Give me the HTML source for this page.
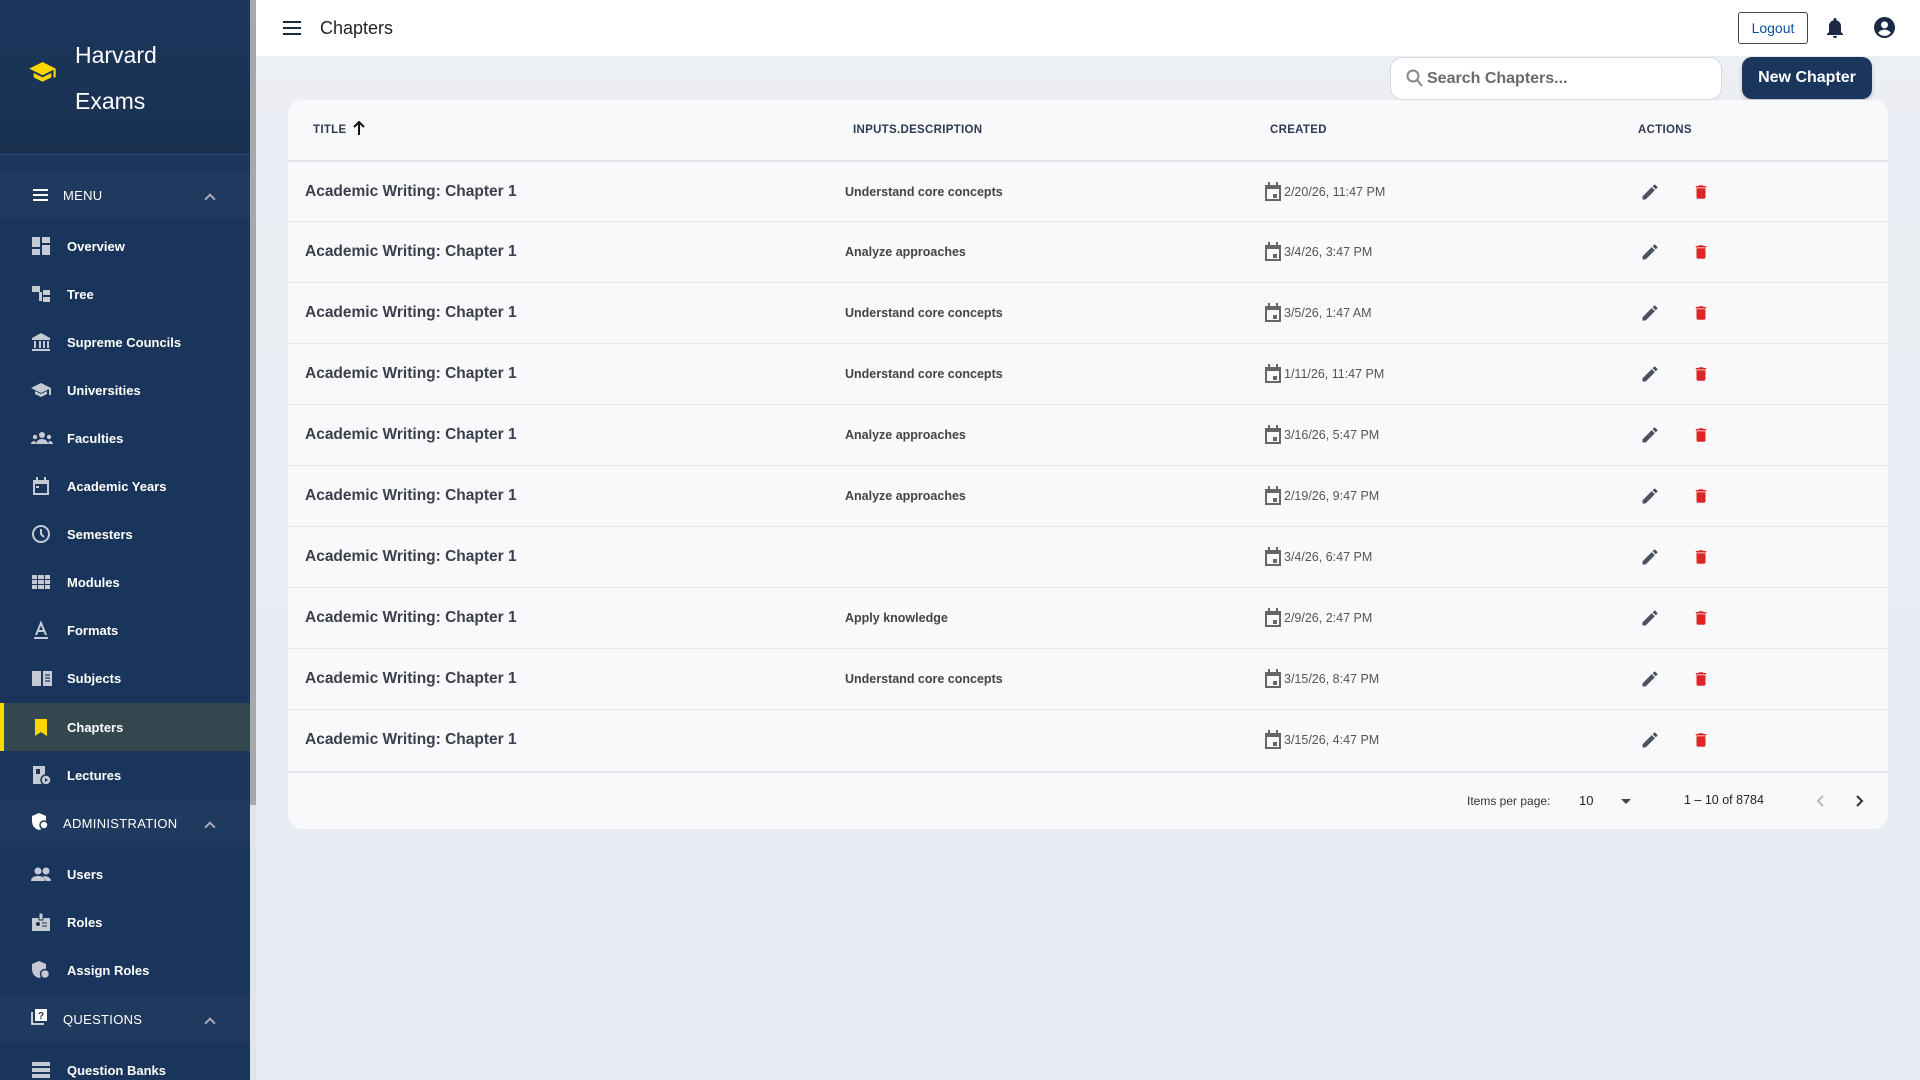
<!DOCTYPE html>
<html><head><meta charset="utf-8"><style>
*{box-sizing:border-box;margin:0;padding:0}
html{overflow:hidden}
body{width:1920px;height:1080px;overflow:hidden;font-family:"Liberation Sans",sans-serif;background:linear-gradient(180deg,#eceff4,#e6eaf1);position:relative}
.sb{position:absolute;left:0;top:0;width:250px;height:1080px;background:#1a355b;color:#fff;overflow:hidden}
.sbar{position:absolute;left:250px;top:0;width:6px;height:1080px;background:#e2e4e8}
.sbar i{position:absolute;left:0;top:0;width:6px;height:805px;background:#a8a8a8}
.brand{height:155px;background:linear-gradient(180deg,#1b365d,#1a3150);border-bottom:1px solid #2d4a70;position:relative}
.brand .t{position:absolute;left:75px;top:32px;font-size:23px;line-height:46px}
.sec{position:absolute;left:0;width:250px;height:48px;background:#20395e;font-size:13px;display:flex;align-items:center}
.sec span{position:absolute;left:63px;letter-spacing:.3px}
.sec .chev{position:absolute;left:206px;top:24px;width:8px;height:8px;border-left:2px solid #aab;border-top:2px solid #aab;transform:rotate(45deg)}
.it{position:absolute;left:0;width:250px;height:48px;font-size:13px;font-weight:bold;display:flex;align-items:center}
.it span{position:absolute;left:67px}
.it svg{position:absolute;left:31px;top:14px}
.act{background:#34474f;border-left:4px solid #ffd600}
.hdr{position:absolute;left:256px;top:0;right:0;height:56px;background:#fff}
.card{position:absolute;left:288px;top:100px;width:1600px;height:729px;background:#f9f9fc;border-radius:14px;overflow:hidden}
.th{position:absolute;top:0;height:60px;font-size:11.5px;font-weight:bold;color:#2e3a55;line-height:60px;letter-spacing:.3px}
.row{position:absolute;left:0;width:1600px;height:61px;border-top:1px solid #e6e7ee}
.row .a{position:absolute;left:17px;top:21px;font-size:15.5px;font-weight:bold;color:#3a3f4b}
.row .d{position:absolute;left:557px;top:23px;font-size:12.5px;font-weight:bold;color:#444}
.row .c{position:absolute;left:976px;top:20px;font-size:12.5px;color:#555;display:flex;align-items:center;gap:2px}
.row .e{position:absolute;left:1352px;top:20px}
.row .x{position:absolute;left:1404px;top:20px}
</style></head><body>
<div class="sb">
 <div class="brand">
  <svg style="position:absolute;left:29px;top:62px" width="27" height="22" viewBox="0 0 24 20"><path fill="#ffd600" d="M12 0L0 6l12 6 10-5v7h2V6z M4 10v4l8 4 8-4v-4l-8 4z"/></svg>
  <div class="t">Harvard<br>Exams</div>
 </div>
 <div class="sec" style="top:171px"><svg style="position:absolute;left:33px;top:18px" width="15" height="12"><rect y="0" width="15" height="2" fill="#fff"/><rect y="5" width="15" height="2" fill="#fff"/><rect y="10" width="15" height="2" fill="#fff"/></svg><span>MENU</span><i class="chev"></i></div>
 <div class="it" style="top:222px"><svg width="20" height="20"><rect x="1" y="1" width="8" height="10" fill="#c5cad3"/><rect x="11" y="1" width="8" height="6" fill="#c5cad3"/><rect x="1" y="13" width="8" height="6" fill="#c5cad3"/><rect x="11" y="9" width="8" height="10" fill="#c5cad3"/></svg><span>Overview</span></div>
 <div class="it" style="top:270px"><svg width="20" height="20"><rect x="1" y="2" width="8" height="6" fill="#c5cad3"/><rect x="12" y="6" width="7" height="5" fill="#c5cad3"/><rect x="12" y="13" width="7" height="5" fill="#c5cad3"/><rect x="8" y="8" width="3" height="9" fill="#c5cad3"/></svg><span>Tree</span></div>
 <div class="it" style="top:318px"><svg width="20" height="20"><path fill="#c5cad3" d="M10 1L1 6v2h18V6zM3 9h2v7H3zM8 9h2v7H8zM12 9h2v7h-2zM16 9h2v7h-2zM1 17h18v2H1z"/></svg><span>Supreme Councils</span></div>
 <div class="it" style="top:366px"><svg width="20" height="20"><path fill="#c5cad3" d="M10 3L0 8l10 5 8-4v6h2V8zM4 11v3l6 3 6-3v-3l-6 3z"/></svg><span>Universities</span></div>
 <div class="it" style="top:414px"><svg width="22" height="20"><circle cx="11" cy="7" r="3" fill="#c5cad3"/><circle cx="4" cy="9" r="2.2" fill="#c5cad3"/><circle cx="18" cy="9" r="2.2" fill="#c5cad3"/><path fill="#c5cad3" d="M5 16c0-3 3-5 6-5s6 2 6 5zM0 16c0-2 2-3 4-3l1 3zM22 16c0-2-2-3-4-3l-1 3z"/></svg><span>Faculties</span></div>
 <div class="it" style="top:462px"><svg width="20" height="20"><path fill="#c5cad3" d="M2 4h16v15H2zM5 1h2v4H5zM13 1h2v4h-2z"/><rect x="4" y="8" width="12" height="9" fill="#1a355b"/><rect x="5" y="10" width="3" height="2" fill="#c5cad3"/></svg><span>Academic Years</span></div>
 <div class="it" style="top:510px"><svg width="20" height="20"><circle cx="10" cy="10" r="8" fill="none" stroke="#c5cad3" stroke-width="2"/><path d="M10 5v5l3 3" stroke="#c5cad3" stroke-width="2" fill="none"/></svg><span>Semesters</span></div>
 <div class="it" style="top:558px"><svg width="20" height="20"><path fill="#c5cad3" d="M1 3h5v4H1zM7 3h6v4H7zM14 3h5v4h-5zM1 8h5v4H1zM7 8h6v4H7zM14 8h5v4h-5zM1 13h5v4H1zM7 13h6v4H7zM14 13h5v4h-5z"/></svg><span>Modules</span></div>
 <div class="it" style="top:606px"><svg width="20" height="20"><path fill="none" stroke="#c5cad3" stroke-width="2" d="M5 15L10 3l5 12M7 11h6M3 18h14"/></svg><span>Formats</span></div>
 <div class="it" style="top:654px"><svg width="22" height="20"><path fill="#c5cad3" d="M1 3h9v15H1zM12 3h9v15h-9z"/><path stroke="#1a355b" stroke-width="1.2" d="M14 7h5M14 10h5M14 13h5"/></svg><span>Subjects</span></div>
 <div class="it act" style="top:703px"><svg style="left:27px" width="20" height="20"><path fill="#ffd600" d="M4 2h12v17l-6-4-6 4z"/></svg><span style="left:63px">Chapters</span></div>
 <div class="it" style="top:751px"><svg width="20" height="20"><path fill="#c5cad3" d="M2 1h12v18H2z"/><rect x="5" y="4" width="4" height="5" fill="#1a355b"/><circle cx="15" cy="15" r="5" fill="#c5cad3" stroke="#1a355b" stroke-width="1.5"/><path d="M14 13l3 2-3 2z" fill="#1a355b"/></svg><span>Lectures</span></div>
 <div class="sec" style="top:799px"><svg style="position:absolute;left:32px;top:14px" width="16" height="18"><path fill="#fff" d="M7 0l7 3v5c0 5-3 8-7 9-4-1-7-4-7-9V3z"/><circle cx="12" cy="12" r="4" fill="#fff" stroke="#20395e" stroke-width="1.5"/></svg><span>ADMINISTRATION</span><i class="chev"></i></div>
 <div class="it" style="top:850px"><svg width="22" height="20"><circle cx="7" cy="7" r="3.5" fill="#c5cad3"/><circle cx="15" cy="7" r="3.5" fill="#c5cad3"/><path fill="#c5cad3" d="M0 17c0-4 4-5 7-5s7 1 7 5zM12 12c3 0 8 1 8 5h-5z"/></svg><span>Users</span></div>
 <div class="it" style="top:898px"><svg width="20" height="20"><path fill="#c5cad3" d="M1 6h18v13H1z"/><rect x="8" y="1" width="4" height="7" fill="#c5cad3" stroke="#1a355b"/><circle cx="7" cy="12" r="2" fill="#1a355b"/><path stroke="#1a355b" d="M11 11h5M11 14h5"/></svg><span>Roles</span></div>
 <div class="it" style="top:946px"><svg width="20" height="20"><path fill="#c5cad3" d="M8 1l7 3v5c0 5-3 8-7 9-4-1-7-4-7-9V4z"/><circle cx="14" cy="14" r="4.5" fill="#c5cad3" stroke="#1a355b" stroke-width="1.5"/></svg><span>Assign Roles</span></div>
 <div class="sec" style="top:995px"><svg style="position:absolute;left:31px;top:13px" width="17" height="17"><path fill="none" stroke="#fff" stroke-width="1.5" d="M1 4v12h12"/><rect x="4" y="1" width="12" height="12" fill="#fff"/><text x="7" y="11" font-size="10" font-weight="bold" fill="#20395e" font-family="Liberation Sans">?</text></svg><span>QUESTIONS</span><i class="chev"></i></div>
 <div class="it" style="top:1046px"><svg width="20" height="20"><path fill="#c5cad3" d="M1 2h18v4H1zM1 8h18v4H1zM1 14h18v4H1z"/></svg><span>Question Banks</span></div>
</div>
<div class="sbar"><i></i></div>
<div class="hdr">
 <svg style="position:absolute;left:27px;top:21px" width="18" height="14"><rect width="18" height="2" fill="#1d2b44"/><rect y="6" width="18" height="2" fill="#1d2b44"/><rect y="12" width="18" height="2" fill="#1d2b44"/></svg>
 <div style="position:absolute;left:64px;top:18px;font-size:18px;color:#222">Chapters</div>
 <div style="position:absolute;left:1482px;top:12px;width:70px;height:32px;border:1px solid #444;border-radius:3px;color:#0f4fa8;font-size:14px;text-align:center;line-height:30px">Logout</div>
 <svg style="position:absolute;left:1570px;top:18px" width="18" height="21" viewBox="0 0 18 21"><path fill="#1a2a44" d="M9 0a1.5 1.5 0 0 1 1.5 1.5v.8C13 3 15 5.3 15 8v6l2 2v1H1v-1l2-2V8c0-2.7 2-5 4.5-5.7v-.8A1.5 1.5 0 0 1 9 0zM7 18h4a2 2 0 0 1-4 0z"/></svg>
 <svg style="position:absolute;left:1618px;top:17px" width="21" height="21" viewBox="0 0 20 20"><circle cx="10" cy="10" r="10" fill="#1a2a44"/><circle cx="10" cy="7.5" r="3.3" fill="#fff"/><path fill="#fff" d="M4 15c1.5-2 3.5-3 6-3s4.5 1 6 3c-1.5 2-3.5 3-6 3s-4.5-1-6-3z"/></svg>
</div>
<div style="position:absolute;left:1390px;top:57px;width:332px;height:43px;background:#fff;border:1px solid #d5d8de;border-radius:12px">
 <svg style="position:absolute;left:15px;top:11px" width="18" height="19"><circle cx="7" cy="7" r="5.5" fill="none" stroke="#888" stroke-width="2"/><path d="M11 11l5 6" stroke="#888" stroke-width="2"/></svg>
 <div style="position:absolute;left:36px;top:12px;font-size:16px;font-weight:bold;color:#6a6a6a">Search Chapters...</div>
</div>
<div style="position:absolute;left:1742px;top:57px;width:130px;height:42px;background:#1b365d;border-radius:10px;color:#fff;font-size:16px;font-weight:bold;text-align:center;line-height:42px;box-shadow:0 2px 4px rgba(0,0,0,.2)">New Chapter</div>
<div class="card">
 <div class="th" style="left:25px">TITLE <svg width="12" height="14" style="vertical-align:-2px;margin-left:3px"><path d="M6 1v13M1 6l5-5 5 5" stroke="#111" stroke-width="2" fill="none"/></svg></div>
 <div class="th" style="left:565px">INPUTS.DESCRIPTION</div>
 <div class="th" style="left:982px">CREATED</div>
 <div class="th" style="left:1350px">ACTIONS</div>
 <div id="rows"></div>
 <div style="position:absolute;left:0;top:671px;width:1600px;border-top:2px solid #e3e4ea"></div>
 <div style="position:absolute;left:1179px;top:694px;font-size:12px;color:#333">Items per page:</div>
 <div style="position:absolute;left:1291px;top:693px;font-size:13px;color:#222">10</div>
 <div style="position:absolute;left:1333px;top:699px;border:5px solid transparent;border-top:5px solid #444"></div>
 <div style="position:absolute;left:1396px;top:693px;font-size:12.5px;color:#222">1 – 10 of 8784</div>
 <svg style="position:absolute;left:1527px;top:694px" width="10" height="14"><path d="M8 2L3 7l5 5" stroke="#bbb" stroke-width="2" fill="none"/></svg>
 <svg style="position:absolute;left:1567px;top:694px" width="10" height="14"><path d="M2 2l5 5-5 5" stroke="#333" stroke-width="2" fill="none"/></svg>
</div>
<script>
var d=[["Understand core concepts","2/20/26, 11:47 PM"],["Analyze approaches","3/4/26, 3:47 PM"],["Understand core concepts","3/5/26, 1:47 AM"],["Understand core concepts","1/11/26, 11:47 PM"],["Analyze approaches","3/16/26, 5:47 PM"],["Analyze approaches","2/19/26, 9:47 PM"],["","3/4/26, 6:47 PM"],["Apply knowledge","2/9/26, 2:47 PM"],["Understand core concepts","3/15/26, 8:47 PM"],["","3/15/26, 4:47 PM"]];
var h="";d.forEach(function(r,i){h+='<div class="row" style="top:'+(60+i*61)+'px;'+(i==0?'border-top:2px solid #e3e4ea':'')+'"><div class="a">Academic Writing: Chapter 1</div><div class="d">'+r[0]+'</div><div class="c"><svg width="18" height="20" viewBox="0 0 18 20"><path fill="#666" d="M1 3h16v16H1zM4 0h2v4H4zM12 0h2v4h-2z"/><rect x="3" y="7" width="12" height="10" fill="#f9f9fc"/><rect x="9" y="12" width="4" height="4" fill="#666"/></svg>'+r[1]+'</div><svg class="e" width="20" height="20" viewBox="0 0 24 24"><path fill="#4a5160" d="M3 17.25V21h3.75L17.8 9.94l-3.75-3.75zM20.7 7.04a1 1 0 0 0 0-1.41l-2.340-2.34a1 1 0 0 0-1.41 0l-1.83 1.83 3.75 3.75z"/></svg><svg class="x" width="18" height="20" viewBox="0 0 24 24"><path fill="#dc2626" d="M6 19c0 1.1.9 2 2 2h8c1.1 0 2-.9 2-2V7H6zM19 4h-3.5l-1-1h-5l-1 1H5v2h14z"/></svg></div>'});
document.getElementById("rows").innerHTML=h;
</script>
</body></html>
